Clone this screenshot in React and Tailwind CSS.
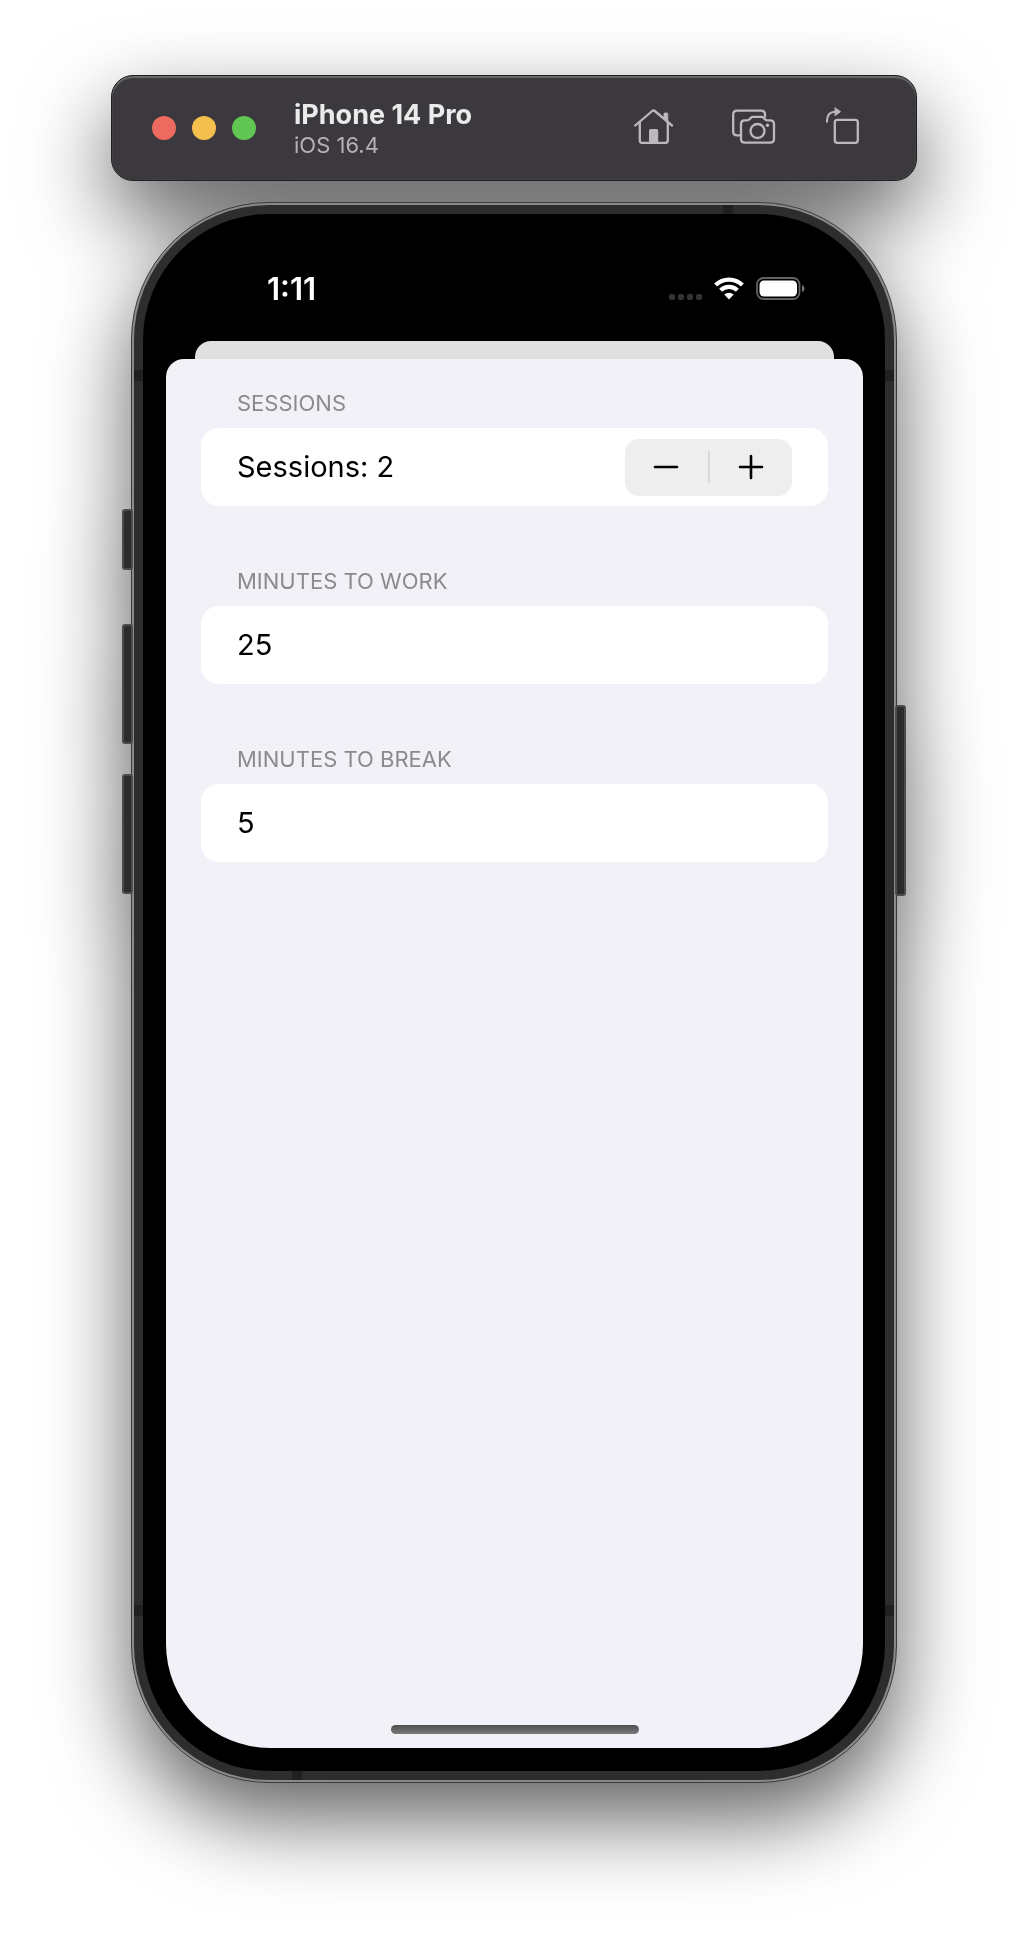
import { useState } from "react";

function HomeIcon() {
  return (
    <svg width="40" height="36" viewBox="634 107 40 36" fill="none" stroke="#bcb9be" strokeWidth="2.3" strokeLinecap="round" strokeLinejoin="round">
      <path d="M635.2 124.5 L652.2 110 Q653.5 109 654.8 110 L672 124.5" />
      <path d="M639.8 121.5 V139.5 Q639.8 141.8 642 141.8 H665.6 Q667.8 141.8 667.8 139.5 V121.5" />
      <path d="M664 112.5 Q664 112 664.5 112 H667.3 Q667.8 112 667.8 112.5 V120 L664 117 Z" fill="#bcb9be" strokeWidth="0.8" />
      <path d="M649 142 V129.5 Q649 128 650.5 128 H656.7 Q658.2 128 658.2 129.5 V142 Z" fill="#bcb9be" stroke="none" />
    </svg>
  );
}

function ScreenshotIcon() {
  return (
    <svg width="44" height="36" viewBox="732 108 44 36" fill="none" stroke="#bcb9be" strokeWidth="2.3" strokeLinecap="round" strokeLinejoin="round">
      <path d="M740.5 135.3 H737.2 Q733.2 135.3 733.2 131.5 V114.5 Q733.2 110.7 737.2 110.7 H761 Q765 110.7 765 114.5 V116.5" />
      <path d="M744.5 120.3 H747.2 Q748.6 120.3 749.5 119.3 L750.8 117.9 Q751.8 116.9 753.2 116.9 H761.2 Q762.6 116.9 763.6 117.9 L764.9 119.3 Q765.8 120.3 767.2 120.3 H770.2 Q774 120.3 774 124 V139 Q774 142.6 770.2 142.6 H744.8 Q741 142.6 741 139 V124 Q741 120.3 744.5 120.3 Z" />
      <circle cx="757.5" cy="131" r="7" />
      <circle cx="767.5" cy="125.3" r="1.7" fill="#bcb9be" stroke="none" />
    </svg>
  );
}

function RotateIcon() {
  return (
    <svg width="36" height="40" viewBox="825 104 36 40" fill="none" stroke="#bcb9be" strokeWidth="2.3" strokeLinecap="round" strokeLinejoin="round">
      <rect x="834.8" y="117.8" width="23" height="23" rx="2.5" />
      <path d="M827 119.8 V118.5 Q827 110 835.5 109.7" strokeWidth="2" />
      <path d="M835.3 106 L840.5 109.7 L835.3 113.4 Z" fill="#bcb9be" strokeWidth="1" />
    </svg>
  );
}

function Toolbar() {
  return (
    <header className="flex w-full items-center justify-between rounded-[22px] border border-[#1f1f20] bg-[#3c393e] py-[22px] pr-[55px] pl-10 shadow-[inset_0_2px_1px_#6b6a6c,inset_0_0_1px_#77767a]">
      <div className="flex items-center gap-[38px]">
        <div className="flex gap-4">
          <button type="button" aria-label="Close" className="size-6 rounded-full bg-[#ed6a5e]" />
          <button type="button" aria-label="Minimize" className="size-6 rounded-full bg-[#f5bf4f]" />
          <button type="button" aria-label="Zoom" className="size-6 rounded-full bg-[#62c654]" />
        </div>
        <div>
          <h1 className="text-[27px] leading-[34px] font-bold text-[#ecebec]">iPhone 14 Pro</h1>
          <p className="text-[22px] leading-[26px] text-[#b5b2b7]">iOS 16.4</p>
        </div>
      </div>
      <div className="flex items-center pb-1">
        <button type="button" aria-label="Home" className="mr-[58px]"><HomeIcon /></button>
        <button type="button" aria-label="Screenshot" className="mr-[49px]"><ScreenshotIcon /></button>
        <button type="button" aria-label="Rotate"><RotateIcon /></button>
      </div>
    </header>
  );
}

function StatusBar() {
  return (
    <div className="flex h-[127px] items-center justify-between pt-[22px] pr-[58px] pl-[101px] text-white">
      <span className="text-[31px] leading-8 font-semibold">1:11</span>
      <div className="flex items-center gap-3">
        <div className="flex gap-[3px] pt-4">
          <span className="size-1.5 rounded-xs bg-[#343434]" />
          <span className="size-1.5 rounded-xs bg-[#343434]" />
          <span className="size-1.5 rounded-xs bg-[#343434]" />
          <span className="size-1.5 rounded-xs bg-[#343434]" />
        </div>
        <svg width="30" height="23" viewBox="0 0 30 23" fill="none" stroke="white" aria-label="Wi-Fi">
          <path d="M1.6 7.8 A19 19 0 0 1 28.4 7.8" strokeWidth="4.2" transform="translate(0 .3)" />
          <path d="M6.6 13 A12 12 0 0 1 23.4 13" strokeWidth="4.2" transform="translate(0 .3)" />
          <path d="M15 22.4 L10.3 17.6 A6.6 6.6 0 0 1 19.7 17.6 Z" fill="white" stroke="none" />
        </svg>
        <svg width="49" height="23" viewBox="0 0 49 23" aria-label="Battery">
          <rect x="1" y="1" width="42.5" height="21" rx="6.5" fill="none" stroke="#626262" strokeWidth="1.8" />
          <rect x="3.5" y="3.5" width="37.5" height="16" rx="4.5" fill="white" />
          <path d="M46 8 Q48.6 9 48.6 11.5 Q48.6 14 46 15 Z" fill="#767676" />
        </svg>
      </div>
    </div>
  );
}

const sectionLabel = "block px-9 text-[22px] leading-7 font-normal text-[#8a8a8f]";
const card = "mt-[11px] flex h-[78px] items-center rounded-[18px] bg-white px-9";

function MinutesField({ id, label, initial }) {
  const [value, setValue] = useState(initial);
  return (
    <section>
      <label htmlFor={id} className={sectionLabel}>{label}</label>
      <div className={card}>
        <input
          id={id}
          inputMode="numeric"
          value={value}
          onChange={(e) => setValue(e.target.value)}
          className="w-full bg-transparent text-[29px] leading-9 text-black outline-none"
        />
      </div>
    </section>
  );
}

function SettingsForm() {
  const [sessions, setSessions] = useState(2);
  return (
    <form className="flex flex-col gap-[61px] px-[35px] pt-[30px]">
      <section>
        <h2 className={sectionLabel}>SESSIONS</h2>
        <div className={card + " justify-between"}>
          <span className="text-[29px] leading-9 text-black">Sessions: {sessions}</span>
          <div className="flex h-[57px] w-[167px] items-center rounded-[14px] bg-[#eeeeef]">
            <button type="button" aria-label="Decrease sessions" onClick={() => setSessions(Math.max(1, sessions - 1))} className="flex h-full flex-1 items-center justify-center">
              <svg width="26" height="26" viewBox="0 0 26 26" stroke="black" strokeWidth="2.6" strokeLinecap="round"><path d="M2 13 H24" /></svg>
            </button>
            <span className="h-8 w-0.5 bg-[#d8d8da]" />
            <button type="button" aria-label="Increase sessions" onClick={() => setSessions(sessions + 1)} className="flex h-full flex-1 items-center justify-center">
              <svg width="26" height="26" viewBox="0 0 26 26" stroke="black" strokeWidth="2.6" strokeLinecap="round"><path d="M2 13 H24 M13 2 V24" /></svg>
            </button>
          </div>
        </div>
      </section>
      <MinutesField id="work" label="MINUTES TO WORK" initial="25" />
      <MinutesField id="break" label="MINUTES TO BREAK" initial="5" />
    </form>
  );
}

const sideKey = "absolute w-[11px] rounded-[3px] border-2 border-[#4c4c4c] bg-[#2c2c2c]";
const leftKey = sideKey + " -left-[9px]";
const band = "absolute bg-[#202020]";

function Phone() {
  return (
    <div className="relative mt-[21px] w-full max-w-[766px]">
      <div className="relative rounded-[138px] border border-[#3a3a3a] bg-[#8a8a8a] p-0.5">
        <div className="rounded-[135px] bg-[#2d2d2d] p-[9px]">
          <span className={band + " top-[10.6%] left-0.5 h-[11px] w-[9px]"} />
          <span className={band + " top-[10.6%] right-0.5 h-[11px] w-[9px]"} />
          <span className={band + " top-[88.8%] left-0.5 h-[11px] w-[9px]"} />
          <span className={band + " top-[88.8%] right-0.5 h-[11px] w-[9px]"} />
          <span className={band + " top-0.5 left-[77.4%] h-[9px] w-2.5"} />
          <span className={band + " bottom-0.5 left-[21%] h-[9px] w-2.5"} />
          <div className="flex aspect-[742/1557] flex-col rounded-[126px] bg-black pr-[22px] pb-[23px] pl-[23px]">
            <StatusBar />
            <div className="mx-[29px] h-[18px] rounded-t-2xl bg-[#e0e0e0]" />
            <main className="flex grow flex-col justify-between rounded-t-[18px] rounded-b-[104px] bg-[#f2f1f7]">
              <SettingsForm />
              <div className="mx-auto mb-3.5 h-[9px] w-[248px] rounded-full bg-linear-to-b from-[#4f4f4f] to-[#7b7b7b]" />
            </main>
          </div>
        </div>
      </div>
      <span className={leftKey + " top-[19.4%] h-[3.9%]"} />
      <span className={leftKey + " top-[26.7%] h-[7.6%]"} />
      <span className={leftKey + " top-[36.2%] h-[7.6%]"} />
      <span className={sideKey + " top-[31.8%] -right-[9px] h-[12.1%]"} />
    </div>
  );
}

export default function App() {
  return (
    <div className="flex min-h-screen justify-center overflow-hidden bg-white pt-[75px] pb-[148px] font-['Inter',sans-serif]">
      <div className="flex w-full max-w-[806px] flex-col items-center drop-shadow-[0_36px_42px_rgba(0,0,0,0.62)]">
        <Toolbar />
        <Phone />
      </div>
    </div>
  );
}
